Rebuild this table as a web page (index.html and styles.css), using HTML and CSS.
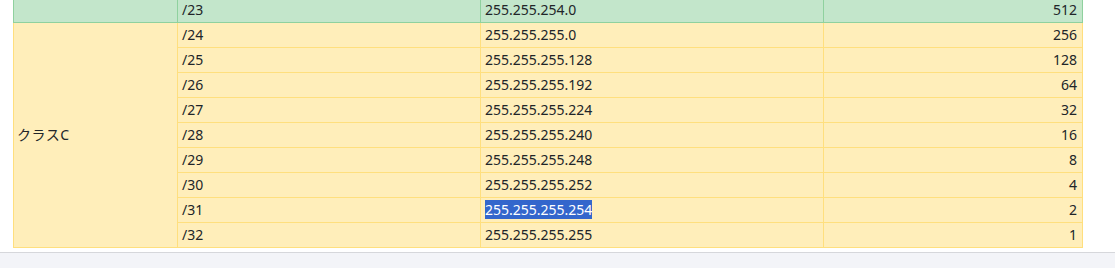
FILE: index.html
```html
<!DOCTYPE html>
<html lang="ja">
<head>
<meta charset="utf-8">
<link rel="stylesheet" href="styles.css">
</head>
<body>
<div class="wrap">
<table class="mask">
  <colgroup>
    <col class="c1"><col class="c2"><col class="c3"><col class="c4">
  </colgroup>
  <tbody>
    <tr class="green">
      <td></td><td>/23</td><td>255.255.254.0</td><td class="num">512</td>
    </tr>
    <tr class="yellow">
      <td rowspan="10" class="cls">クラスC</td><td>/24</td><td>255.255.255.0</td><td class="num">256</td>
    </tr>
    <tr class="yellow"><td>/25</td><td>255.255.255.128</td><td class="num">128</td></tr>
    <tr class="yellow"><td>/26</td><td>255.255.255.192</td><td class="num">64</td></tr>
    <tr class="yellow"><td>/27</td><td>255.255.255.224</td><td class="num">32</td></tr>
    <tr class="yellow"><td>/28</td><td>255.255.255.240</td><td class="num">16</td></tr>
    <tr class="yellow"><td>/29</td><td>255.255.255.248</td><td class="num">8</td></tr>
    <tr class="yellow"><td>/30</td><td>255.255.255.252</td><td class="num">4</td></tr>
    <tr class="yellow"><td>/31</td><td><span class="sel">255.255.255.254</span></td><td class="num">2</td></tr>
    <tr class="yellow"><td>/32</td><td>255.255.255.255</td><td class="num">1</td></tr>
  </tbody>
</table>
</div>
<div class="footer"></div>
</body>
</html>
```

FILE: styles.css
```css
html, body {
  margin: 0;
  padding: 0;
  background: #ffffff;
}
body {
  font-family: "Noto Sans", "Noto Sans CJK JP", sans-serif;
  font-size: 14px;
  color: #212529;
  overflow: hidden;
}
.wrap {
  padding-left: 13px;
  margin-top: -3px;
}
.mask {
  border-collapse: collapse;
  table-layout: fixed;
  width: 1069px;
}
.c1 { width: 164px; }
.c2 { width: 303px; }
.c3 { width: 343px; }
.c4 { width: 259px; }
.mask td {
  padding: 2px 5px 2px 4px;
  line-height: 20px;
  height: 20px;
  white-space: nowrap;
}
.green td {
  background: #c3e6cb;
  border: 1px solid #8fd19e;
}
.yellow td {
  background: #ffeeba;
  border: 1px solid #ffdf7e;
}
.mask .num {
  text-align: right;
}
.mask .cls {
  vertical-align: middle;
  padding-left: 3px;
  letter-spacing: 0.5px;
}
.sel {
  background: #3366cc;
  color: #ffffff;
}
.footer {
  margin-top: 4px;
  height: 20px;
  border-top: 1px solid #d6d7db;
  background: #f3f4f8;
}
```
